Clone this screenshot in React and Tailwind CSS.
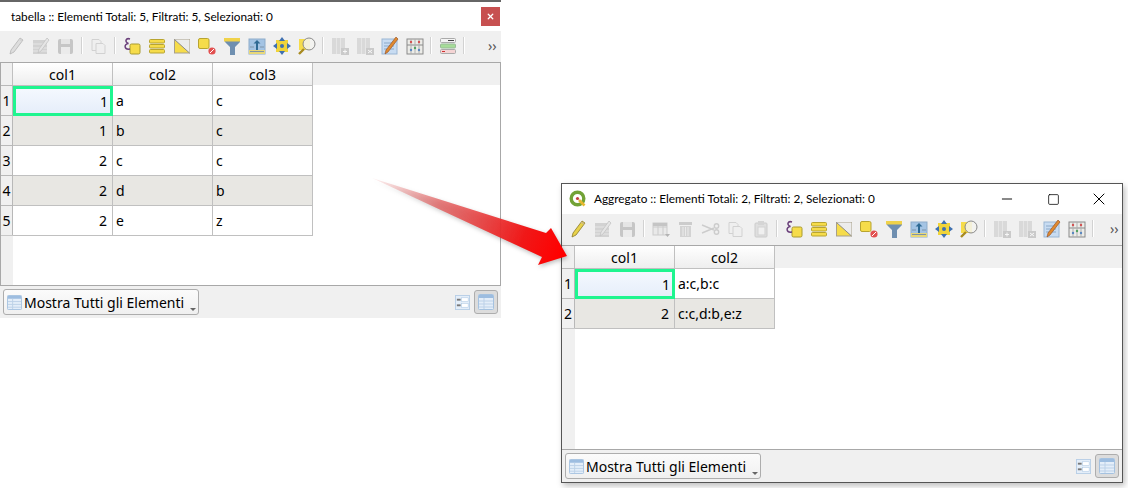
import { X, Minus, Square } from 'lucide-react'

const font = { fontFamily: '"Noto Sans", "Open Sans", sans-serif' }

const Pencil = () => (
  <svg viewBox="0 0 20 20" className="w-5 h-5">
    <path d="M14 2l3 2-9 12-4 2 1-4z" fill="#e8d24a" stroke="#8a7a2a" strokeWidth="0.8" />
    <path d="M13 3l3 2" stroke="#c9b88a" strokeWidth="1.5" />
  </svg>
)
const EditTable = () => (
  <svg viewBox="0 0 20 20" className="w-5 h-5">
    <rect x="2" y="4" width="14" height="14" fill="#b8b5a6" />
    <path d="M2 8h14M2 12h14M2 15h14" stroke="#e2e0d6" />
    <path d="M16 2l2 2-8 11-3 2 1-4z" fill="#dddbd0" stroke="#9a988c" strokeWidth="0.8" />
  </svg>
)
const Save = () => (
  <svg viewBox="0 0 20 20" className="w-5 h-5">
    <rect x="2" y="3" width="15" height="15" rx="2" fill="#9d9d9d" />
    <rect x="5" y="3" width="9" height="5" fill="#dcdcdc" />
    <rect x="5" y="11" width="9" height="7" fill="#e8e8e8" />
  </svg>
)
const Copy = () => (
  <svg viewBox="0 0 20 20" className="w-5 h-5" fill="#efefef" stroke="#b5b5b5">
    <path d="M3 3.500h7l2 2v9H3z" />
    <path d="M7 7.500h7l2 2v8H7z" />
  </svg>
)
const Paste = () => (
  <svg viewBox="0 0 20 20" className="w-5 h-5">
    <rect x="4" y="4" width="12" height="14" rx="1" fill="#d0d0d0" stroke="#a8a8a8" />
    <rect x="7" y="2" width="6" height="4" fill="#bcbcbc" />
    <rect x="7" y="8" width="7" height="8" fill="#f0f0f0" stroke="#b5b5b5" />
  </svg>
)
const NewRow = () => (
  <svg viewBox="0 0 20 20" className="w-5 h-5">
    <rect x="2" y="4" width="14" height="12" fill="#e4e4e4" stroke="#a8a8a8" />
    <path d="M2 8h14M7 4v12M12 4v12" stroke="#a8a8a8" />
    <rect x="2" y="4" width="14" height="3" fill="#9c9c9c" />
    <path d="M14 15h5l-2.500 3z" fill="#777" />
  </svg>
)
const Trash = () => (
  <svg viewBox="0 0 20 20" className="w-5 h-5">
    <rect x="3" y="3" width="13" height="3" fill="#aaa" />
    <path d="M4 7h11v11H4z" fill="#b8b8b8" />
    <path d="M7 8v9M9.500 8v9M12 8v9" stroke="#e6e6e6" />
  </svg>
)
const Scissors = () => (
  <svg viewBox="0 0 20 20" className="w-5 h-5" fill="none" stroke="#aaa" strokeWidth="1.400">
    <path d="M1 6l12 5M1 14l12-5" />
    <circle cx="15.500" cy="7" r="2.200" />
    <circle cx="15.500" cy="13" r="2.200" />
  </svg>
)
const SelectExpr = () => (
  <svg viewBox="0 0 20 20" className="w-5 h-5">
    <rect x="8" y="8" width="10" height="10" rx="1.500" fill="#f6dc4a" stroke="#a89a30" />
    <path d="M8 3C4 1.500 2 6 6.500 7.500C1.500 8 2 14 8 13" fill="none" stroke="#6a3f7a" strokeWidth="1.500" />
  </svg>
)
const SelectAll = () => (
  <svg viewBox="0 0 20 20" className="w-5 h-5" fill="#f6dc4a" stroke="#b8a430">
    <rect x="2.500" y="3.500" width="15" height="3.500" rx="1" />
    <rect x="2.500" y="8.500" width="15" height="3.500" rx="1" />
    <rect x="2.500" y="13.500" width="15" height="3.500" rx="1" />
  </svg>
)
const Invert = () => (
  <svg viewBox="0 0 20 20" className="w-5 h-5">
    <rect x="2.500" y="3.500" width="15" height="13.500" fill="#f6dc4a" stroke="#a8a08a" />
    <path d="M2.500 3.500h15v13.500z" fill="#ececec" />
    <path d="M2.500 3.500l15 13.500" stroke="#8a8a8a" />
  </svg>
)
const Deselect = () => (
  <svg viewBox="0 0 20 20" className="w-5 h-5">
    <rect x="1.500" y="2.500" width="10.500" height="10" rx="1.500" fill="#f6dc4a" stroke="#b8a430" />
    <circle cx="15" cy="15" r="3.600" fill="#e25050" />
    <path d="M13 17l4-4" stroke="#fff" />
  </svg>
)
const Filter = () => (
  <svg viewBox="0 0 20 20" className="w-5 h-5">
    <path d="M2 3h16v3l-5 5v8h-5v-8l-5-5z" fill="#6f8fb0" />
    <rect x="2" y="2" width="16" height="3.500" fill="#f0d24a" />
  </svg>
)
const MoveTop = () => (
  <svg viewBox="0 0 20 20" className="w-5 h-5">
    <rect x="2" y="3" width="16" height="15" fill="#a4c4e4" stroke="#8dabc9" />
    <rect x="2" y="14" width="16" height="4" fill="#e8d878" />
    <path d="M10 4l3.500 3.500H11V14H9V7.500H6.500z" fill="#2f6a94" />
    <path d="M3 11h4M13 11h4M3 15.500h14" stroke="#7f94a8" />
  </svg>
)
const Pan = () => (
  <svg viewBox="0 0 20 20" className="w-5 h-5">
    <rect x="4" y="4" width="12" height="12" fill="#f0d43a" />
    <path d="M10 1l3 4H7zM10 19l-3-4h6zM1 10l4-3v6zM19 10l-4 3V7z" fill="#3f70b0" />
    <circle cx="10" cy="10" r="2" fill="#3f70b0" />
  </svg>
)
const ZoomSel = () => (
  <svg viewBox="0 0 20 20" className="w-5 h-5">
    <rect x="2" y="3" width="11" height="11" fill="#f6dc4a" />
    <path d="M2 18l5-5" stroke="#a88a20" strokeWidth="2.400" />
    <circle cx="12" cy="8" r="6" fill="#f3f3f0" fillOpacity="0.850" stroke="#8a8a8a" />
  </svg>
)
const ColAdd = ({ del }) => (
  <svg viewBox="0 0 20 20" className="w-5 h-5">
    <rect x="2" y="2" width="13" height="16" fill="#c4c4c0" />
    <path d="M6.500 2v16M10.500 2v16" stroke="#e4e4e2" strokeWidth="0.800" />
    <rect x="11" y="12" width="8" height="7" fill="#a6a6a0" />
    <path d={del ? 'M13 14l4 3M17 14l-4 3' : 'M15 13.500v4M13 15.500h4'} stroke="#fff" />
  </svg>
)
const EditForm = () => (
  <svg viewBox="0 0 20 20" className="w-5 h-5">
    <rect x="2" y="3" width="15" height="15" fill="#c8dcf2" stroke="#9ab6d4" />
    <path d="M4 7h10M4 10h10M4 13h10" stroke="#8aa8c8" />
    <path d="M16 1l2 2-10 13-3 2 1-4z" fill="#e08a30" stroke="#8f4a20" strokeWidth="0.600" />
  </svg>
)
const Abacus = () => (
  <svg viewBox="0 0 20 20" className="w-5 h-5">
    <rect x="2" y="3" width="16" height="15" fill="#ecece8" stroke="#8a8a8a" />
    <path d="M2 9h16" stroke="#8a8a8a" />
    <path d="M6 3v15M10 3v15M14 3v15" stroke="#b0b0b0" />
    <circle cx="6" cy="6" r="1.200" fill="#d25050" />
    <circle cx="14" cy="6" r="1.200" fill="#d25050" />
    <circle cx="10" cy="12" r="1.200" fill="#50a060" />
    <circle cx="6" cy="14" r="1.200" fill="#5a88c0" />
    <circle cx="14" cy="14" r="1.200" fill="#5a88c0" />
  </svg>
)
const Conditional = () => (
  <svg viewBox="0 0 20 20" className="w-5 h-5">
    <rect x="2.500" y="2.500" width="15" height="4" rx="1" fill="#f4f4f4" stroke="#aaa" />
    <rect x="2.500" y="8" width="15" height="4" rx="1" fill="#a6dc98" stroke="#9b9" />
    <rect x="2.500" y="13.500" width="15" height="4" rx="1" fill="#f4d4d4" stroke="#aaa" />
    <path d="M10 4.500h6" stroke="#444" />
    <path d="M4 15.500h3" stroke="#d03030" />
  </svg>
)

const Sep = () => (
  <div className="w-[8px] flex justify-center">
    <div className="w-px h-[17px] bg-[#d2d2d2] border-r border-white box-content" />
  </div>
)
const Tool = ({ children, off }) => (
  <div className={`w-[25px] h-5 flex items-center justify-center ${off ? 'grayscale opacity-50' : ''}`}>{children}</div>
)

const TableIcon = ({ big }) => (
  <svg viewBox="0 0 16 16" className={big ? 'w-[15px] h-[15px]' : 'w-4 h-4'}>
    <rect x="0.500" y="0.500" width="15" height="15" rx="1" fill="#e4eef9" stroke="#a5c2e0" />
    <rect x="1" y="1" width="14" height="3" fill="#9dbde0" />
    <path d="M1 7h14M1 10h14M1 13h14M6 4v11" stroke="#bcd1e8" />
  </svg>
)
const FormIcon = () => (
  <svg viewBox="0 0 16 16" className="w-[15px] h-[15px]">
    <rect x="0.500" y="0.500" width="15" height="15" fill="#e4eef9" stroke="#b8cfe6" />
    <rect x="2" y="4" width="4" height="2" fill="#777" />
    <rect x="2" y="10" width="4" height="2" fill="#777" />
    <rect x="7" y="3" width="7" height="4" fill="#fff" stroke="#a5c2e0" strokeWidth="0.500" />
    <rect x="7" y="9" width="7" height="4" fill="#fff" stroke="#a5c2e0" strokeWidth="0.500" />
  </svg>
)
const QgisLogo = () => (
  <svg viewBox="0 0 18 18" className="w-[18px] h-[18px]">
    <circle cx="8.500" cy="8.500" r="6.300" fill="none" stroke="#72a236" strokeWidth="3.400" />
    <path d="M10 10l5.500 5.500" stroke="#e6b830" strokeWidth="2.600" />
    <circle cx="8.500" cy="8.500" r="1.600" fill="#c43c3c" />
  </svg>
)

function DataTable({ cols, rows, narrow }) {
  return (
    <div className="flex-1 min-h-0 flex flex-col bg-white border-y border-[#a8a8a8]">
      <div className="flex h-[22px] bg-[#f0f0f0] shrink-0">
        <div className={`${narrow ? 'w-[12px]' : 'w-[13px]'} border-r border-[#c0c0c0] shrink-0`} />
        {cols.map((c) => (
          <div key={c} className="w-[100px] flex items-center justify-center border-r border-[#c0c0c0] bg-gradient-to-b from-white to-[#eeeeee] text-[14px] text-black">
            {c}
          </div>
        ))}
      </div>
      <div className="flex flex-1 min-h-0">
        <div className={`${narrow ? 'w-[12px]' : 'w-[13px]'} bg-[#f0f0f0] shrink-0 flex flex-col`}>
          {rows.map((_, i) => (
            <div key={i} className="h-[30px] flex items-center justify-center border-t border-r border-[#b8b8b8] text-[14px] text-black">
              {i + 1}
            </div>
          ))}
          <div className="flex-1 border-t border-[#c8c8c8]" />
        </div>
        <div className="flex flex-col">
          {rows.map((r, i) => (
            <div key={i} className={`flex h-[30px] border-t border-[#c0c0c0] text-[14px] text-black ${i % 2 ? 'bg-[#e8e7e3]' : 'bg-white'}`}>
              {r.map((v, j) => {
                if (j > 0) {
                  return (
                    <div key={j} className="w-[100px] flex items-center border-r border-[#c0c0c0] pl-[3px]">
                      {v}
                    </div>
                  )
                }
                if (i === 0) {
                  // current cell sits over the row line below it
                  return (
                    <div key={j} className="relative z-10 w-[100px] -mb-px flex items-center justify-end border-[3px] border-[#1ff58f] bg-gradient-to-b from-[#f4f8fe] to-[#e6eefa] pr-[2px]">
                      {v}
                    </div>
                  )
                }
                return (
                  <div key={j} className="w-[100px] flex items-center justify-end border-r border-[#c0c0c0] pr-[5px]">
                    {v}
                  </div>
                )
              })}
            </div>
          ))}
          <div className="border-t border-[#c0c0c0]" />
        </div>
      </div>
    </div>
  )
}

function Footer() {
  return (
    <div className="flex items-center justify-between bg-[#f0f0f0] px-[3px] h-[32px] shrink-0">
      <div className="relative w-[196px] h-[26px] flex items-center gap-[2px] pl-[3px] rounded-[3px] border border-[#adadad] bg-gradient-to-b from-[#fbfbfb] to-[#f0f0f0] text-[14px] text-black">
        <TableIcon big />
        <span>Mostra Tutti gli Elementi</span>
        <div className="absolute right-[2px] bottom-[3px] w-[6px] h-[3px] bg-[#666] [clip-path:polygon(0_0,100%_0,50%_100%)]" />
      </div>
      <div className="flex items-center gap-[2px]">
        <div className="w-[20px] flex justify-center"><FormIcon /></div>
        <div className="w-[24px] h-[24px] flex items-center justify-center rounded-[3px] border border-[#adadad] bg-[#dcdcdc]">
          <TableIcon />
        </div>
      </div>
    </div>
  )
}

export default function App() {
  return (
    <div className="relative w-[1128px] h-[488px] bg-white overflow-hidden" style={font}>
      {/* source table window */}
      <div className="absolute left-0 top-0 w-[501px] h-[318px] flex flex-col border-t-2 border-[#666666] bg-white">
        <div className="h-[29px] flex items-center justify-between pl-[11px] pr-px shrink-0">
          <span className="text-[11.800px] text-black font-['Lato']">tabella :: Elementi Totali: 5, Filtrati: 5, Selezionati: 0</span>
          <div className="w-[19px] h-[19px] flex items-center justify-center bg-[#c75050]">
            <X className="w-[9px] h-[9px] text-white" strokeWidth={3.5} />
          </div>
        </div>
        <div className="h-[31px] flex items-center pl-[3px] pb-[2px] bg-[#f0f0f0] shrink-0">
          <Tool off><Pencil /></Tool>
          <Tool off><EditTable /></Tool>
          <Tool off><Save /></Tool>
          <Sep />
          <Tool off><Copy /></Tool>
          <Sep />
          <Tool><SelectExpr /></Tool>
          <Tool><SelectAll /></Tool>
          <Tool><Invert /></Tool>
          <Tool><Deselect /></Tool>
          <Tool><Filter /></Tool>
          <Tool><MoveTop /></Tool>
          <Tool><Pan /></Tool>
          <Tool><ZoomSel /></Tool>
          <Sep />
          <Tool off><ColAdd /></Tool>
          <Tool off><ColAdd del /></Tool>
          <Tool><EditForm /></Tool>
          <Tool><Abacus /></Tool>
          <Sep />
          <Tool><Conditional /></Tool>
          <Sep />
          <span className="ml-[20px] text-[14px] text-[#555555]">››</span>
        </div>
        <div className="flex-1 min-h-0 flex flex-col border-r border-[#a8a8a8] border-l">
          <DataTable
            narrow
            cols={['col1', 'col2', 'col3']}
            rows={[['1', 'a', 'c'], ['1', 'b', 'c'], ['2', 'c', 'c'], ['2', 'd', 'b'], ['2', 'e', 'z']]}
          />
        </div>
        <Footer />
      </div>

      {/* aggregated window */}
      <div className="absolute left-[561px] top-[183px] w-[562px] h-[300px] flex flex-col border border-[#555555] bg-white shadow-[2px_3px_6px_rgba(0,0,0,0.25)]">
        <div className="h-[30px] flex items-center pl-[7px] shrink-0">
          <QgisLogo />
          <span className="ml-[7px] text-[11.800px] text-black font-['Lato']">Aggregato :: Elementi Totali: 2, Filtrati: 2, Selezionati: 0</span>
          <div className="ml-auto flex items-center">
            <div className="w-[46px] flex justify-center"><Minus className="w-[16px] h-[16px] text-black" strokeWidth={1.4} absoluteStrokeWidth /></div>
            <div className="w-[46px] flex justify-center"><Square className="w-[13px] h-[13px] text-black" strokeWidth={1.4} absoluteStrokeWidth /></div>
            <div className="w-[46px] flex justify-center"><X className="w-[20px] h-[20px] text-black" strokeWidth={1.2} absoluteStrokeWidth /></div>
          </div>
        </div>
        <div className="h-[31px] flex items-center pl-[3px] pb-[2px] bg-[#f0f0f0] shrink-0">
          <Tool><Pencil /></Tool>
          <Tool off><EditTable /></Tool>
          <Tool off><Save /></Tool>
          <Sep />
          <Tool off><NewRow /></Tool>
          <Tool off><Trash /></Tool>
          <Tool off><Scissors /></Tool>
          <Tool off><Copy /></Tool>
          <Tool off><Paste /></Tool>
          <Sep />
          <Tool><SelectExpr /></Tool>
          <Tool><SelectAll /></Tool>
          <Tool><Invert /></Tool>
          <Tool><Deselect /></Tool>
          <Tool><Filter /></Tool>
          <Tool><MoveTop /></Tool>
          <Tool><Pan /></Tool>
          <Tool><ZoomSel /></Tool>
          <Sep />
          <Tool off><ColAdd /></Tool>
          <Tool off><ColAdd del /></Tool>
          <Tool><EditForm /></Tool>
          <Tool><Abacus /></Tool>
          <Sep />
          <span className="ml-[13px] text-[14px] text-[#555555]">››</span>
        </div>
        <DataTable cols={['col1', 'col2']} rows={[['1', 'a:c,b:c'], ['2', 'c:c,d:b,e:z']]} />
        <Footer />
      </div>

      {/* arrow between the two windows */}
      <svg viewBox="0 0 1128 488" className="absolute left-0 top-0 w-[1128px] h-[488px] pointer-events-none drop-shadow-[1px_2px_2px_rgba(0,0,0,0.25)]">
        <defs>
          <linearGradient id="arrow" gradientUnits="userSpaceOnUse" x1="372" y1="178" x2="560" y2="255">
            <stop offset="0" stopColor="#e88080" stopOpacity="0.1" />
            <stop offset="0.35" stopColor="#e25a5a" stopOpacity="0.75" />
            <stop offset="0.8" stopColor="#f01818" />
            <stop offset="1" stopColor="#ff0000" />
          </linearGradient>
        </defs>
        <polygon points="372,178 546,233 551,228 567,256 538,265 542,257" fill="url(#arrow)" />
      </svg>
    </div>
  )
}
